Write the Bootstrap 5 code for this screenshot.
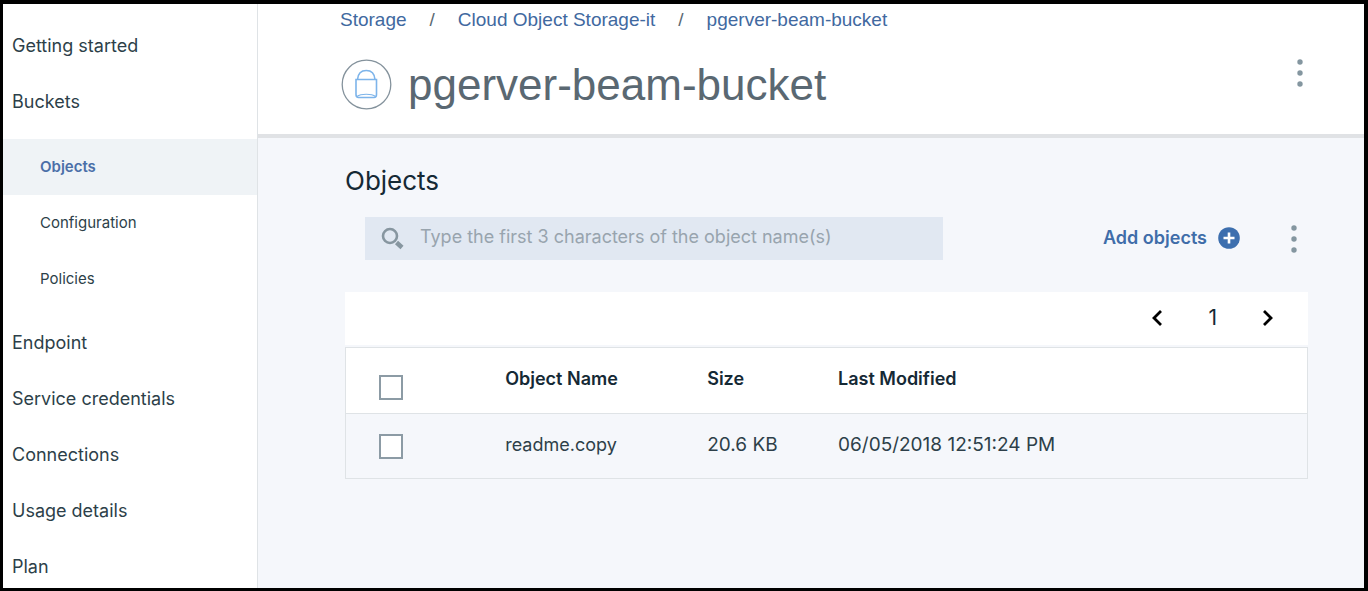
<!DOCTYPE html>
<html lang="en">
<head>
<meta charset="utf-8">
<meta name="viewport" content="width=device-width, initial-scale=1">
<title>pgerver-beam-bucket</title>
<link href="https://cdn.jsdelivr.net/npm/bootstrap@5.3.0/dist/css/bootstrap.min.css" rel="stylesheet">
<style>
  :root { --ink: #152935; --ink-soft: #2d3f49; --link: #41699f; --line: #dfe3e6; --muted: #8c9ba5; --canvas: #f5f7fb; }
  body { font-family: Inter, "Noto Sans", sans-serif; font-size: 18px; line-height: 24px; color: var(--ink); }
  .app-frame { border: solid #000; border-width: 4px 4px 3px 3px; }
  .side-menu { width: 255px; border-right: 1px solid var(--line); padding-top: 14px; }
  .side-menu a { display: block; padding: 16px 9px; color: var(--ink-soft); text-decoration: none; }
  .side-menu > ul > li:last-child > a { padding-bottom: 8px; }
  .sub-menu { padding: 9px 0 8px; }
  .side-menu .sub-menu a { padding-left: 37px; font-size: 15px; }
  .side-menu .sub-menu a.active { background: #eff3f6; color: #4a6fa8; font-weight: 600; }
  .page-head { border-bottom: 4px solid #e0e2e5; padding: 4px 56px 24px 82px; font-family: "Liberation Sans", Arial, sans-serif; }
  .crumbs { font-size: 19px; --bs-breadcrumb-margin-bottom: 27px; --bs-breadcrumb-item-padding-x: 23px; --bs-breadcrumb-divider-color: #5a6872; }
  .crumbs a { color: var(--link); text-decoration: none; }
  .bucket-row { padding-left: 1px; }
  .bucket-title { font-size: 44px; line-height: 50px; font-weight: 400; color: #5a6872; }
  .workspace { background: var(--canvas); padding: 27px 56px 40px 87px; }
  .section-title { font-size: 26px; line-height: 32px; font-weight: 400; margin-bottom: 20px; }
  .icon-btn { padding: 0; border: 0; background: none; line-height: 0; }
  .search-box { width: 60%; margin-left: 20px; padding: 0 16px; background: #e1e8f2; }
  .search-box input { height: 43px; padding: 0 0 4px; border: 0; border-radius: 0; background: none; font-size: 18px; color: var(--ink); }
  .search-box input::placeholder { color: #98a4ae; opacity: 1; }
  .search-box svg { margin-right: 16px; }
  .add-btn { --bs-btn-color: #3f6da9; --bs-btn-font-size: 18px; --bs-btn-font-weight: 600; --bs-btn-line-height: 24px; --bs-btn-padding-x: 0; --bs-btn-padding-y: 0; --bs-btn-border-width: 0; gap: 11px; padding-bottom: 2px; }
  .tools { gap: 51px; padding-right: 11px; }
  .pager { height: 53px; margin-top: 32px; margin-bottom: 2px; gap: 45px; padding: 0 34px 2px; background: #fff; font-size: 21px; }
  .object-table { border: 1px solid var(--line); color: var(--ink); --bs-table-color: var(--ink); table-layout: fixed; }
  .object-table > :not(caption) > * > * { padding: 19px 0; border-color: var(--line); }
  .object-table thead th { background: #fff; padding-bottom: 22px; font-weight: 600; }
  .object-table tbody td { background: var(--canvas); padding-bottom: 21px; color: var(--ink-soft); }
  .object-table tbody tr > * { border-bottom: 0; }
  .object-table tbody td.figures { font-size: 19px; }
  .object-table tr > .pick { padding: 0 0 0 33px; vertical-align: middle; line-height: 0; }
  .object-table thead .pick { padding-top: 14px; }
  .pick .form-check-input { width: 24px; height: 25px; margin: 0; border: 2px solid var(--muted); border-radius: 0; }
  .c-pick { width: 16.6%; } .c-name { width: 21%; } .c-size { width: 13.6%; }
</style>
</head>
<body>
<div class="app-frame d-flex min-vh-100">
  <nav class="side-menu flex-shrink-0 bg-white" aria-label="Service">
    <ul class="list-unstyled mb-0">
      <li><a href="#">Getting started</a></li>
      <li><a href="#">Buckets</a>
        <ul class="sub-menu list-unstyled">
          <li><a href="#" class="active" aria-current="page">Objects</a></li>
          <li><a href="#">Configuration</a></li>
          <li><a href="#">Policies</a></li>
        </ul>
      </li>
      <li><a href="#">Endpoint</a></li>
      <li><a href="#">Service credentials</a></li>
      <li><a href="#">Connections</a></li>
      <li><a href="#">Usage details</a></li>
      <li><a href="#">Plan</a></li>
    </ul>
  </nav>

  <div class="d-flex flex-column flex-grow-1">
    <header class="page-head bg-white">
      <nav aria-label="Breadcrumb">
        <ol class="breadcrumb crumbs">
          <li class="breadcrumb-item"><a href="#">Storage</a></li>
          <li class="breadcrumb-item"><a href="#">Cloud Object Storage-it</a></li>
          <li class="breadcrumb-item"><a href="#">pgerver-beam-bucket</a></li>
        </ol>
      </nav>
      <div class="bucket-row d-flex align-items-center gap-3">
        <svg class="flex-shrink-0" width="51" height="51" viewBox="0 0 51 51" fill="none" aria-hidden="true">
          <circle cx="25.500" cy="25.500" r="24.300" stroke="#84929c" stroke-width="1.300"/>
          <g stroke="#7db4ea" stroke-width="1.600">
            <path d="M15 20.500H35.500V35.500C35.500 37 34.500 38.500 33 38.500H17.500C16 38.500 15 37 15 35.500Z"/>
            <path d="M16.500 20.500C17 14.500 20 11.500 25.300 11.500S33.500 14.500 34 20.500"/>
            <path d="M16 37.500C20 34.500 30.500 34.500 34.500 37.500" stroke-width="1.200"/>
          </g>
        </svg>
        <h1 class="bucket-title mb-0">pgerver-beam-bucket</h1>
        <button class="icon-btn ms-auto align-self-start" type="button" aria-label="Bucket actions">
          <svg width="16" height="28" viewBox="0 0 16 28" fill="#8496a0"><circle cx="8" cy="3" r="2.700"/><circle cx="8" cy="14" r="2.700"/><circle cx="8" cy="25" r="2.700"/></svg>
        </button>
      </div>
    </header>

    <main class="workspace flex-grow-1">
      <h2 class="section-title">Objects</h2>
      <div class="d-flex align-items-center justify-content-between">
        <div class="search-box d-flex align-items-center">
          <svg class="flex-shrink-0" width="23" height="23" viewBox="0 0 23 23" fill="none" stroke="#8796a0" aria-hidden="true">
            <circle cx="9" cy="9" r="7" stroke-width="2.600"/><path d="M15.500 15.500L21 20.500" stroke-width="4.500"/>
          </svg>
          <input class="form-control shadow-none" type="search" aria-label="Search objects" placeholder="Type the first 3 characters of the object name(s)">
        </div>
        <div class="tools d-flex align-items-center">
          <button class="btn add-btn d-flex align-items-center" type="button">Add objects
            <svg width="22" height="22" viewBox="0 0 22 22" aria-hidden="true"><circle cx="11" cy="11" r="10.800" fill="#3d6fae"/><path d="M11 5.500V16.500M5.500 11H16.500" stroke="#fff" stroke-width="2.600"/></svg>
          </button>
          <button class="icon-btn" type="button" aria-label="More actions">
            <svg width="6" height="28" viewBox="0 0 6 28" fill="#8496a0"><circle cx="3" cy="3" r="2.700"/><circle cx="3" cy="14" r="2.700"/><circle cx="3" cy="25" r="2.700"/></svg>
          </button>
        </div>
      </div>

      <nav class="pager d-flex align-items-center justify-content-end" aria-label="Pages">
        <button class="icon-btn" type="button" aria-label="Previous page"><svg width="12" height="16" viewBox="0 0 12 16" fill="none" stroke="#000" stroke-width="2.800"><path d="M10 1L3 8L10 15"/></svg></button>
        <span>1</span>
        <button class="icon-btn" type="button" aria-label="Next page"><svg width="12" height="16" viewBox="0 0 12 16" fill="none" stroke="#000" stroke-width="2.800"><path d="M2 1L9 8L2 15"/></svg></button>
      </nav>

      <table class="table object-table mb-0">
        <colgroup><col class="c-pick"><col class="c-name"><col class="c-size"><col></colgroup>
        <thead>
          <tr>
            <th class="pick"><input class="form-check-input" type="checkbox" aria-label="Select all objects"></th>
            <th scope="col">Object Name</th>
            <th scope="col">Size</th>
            <th scope="col">Last Modified</th>
          </tr>
        </thead>
        <tbody>
          <tr>
            <td class="pick"><input class="form-check-input" type="checkbox" aria-label="Select readme.copy"></td>
            <td>readme.copy</td>
            <td class="figures">20.6 KB</td>
            <td class="figures">06/05/2018 12:51:24 PM</td>
          </tr>
        </tbody>
      </table>
    </main>
  </div>
</div>
<script src="https://cdn.jsdelivr.net/npm/bootstrap@5.3.0/dist/js/bootstrap.bundle.min.js"></script>
</body>
</html>
